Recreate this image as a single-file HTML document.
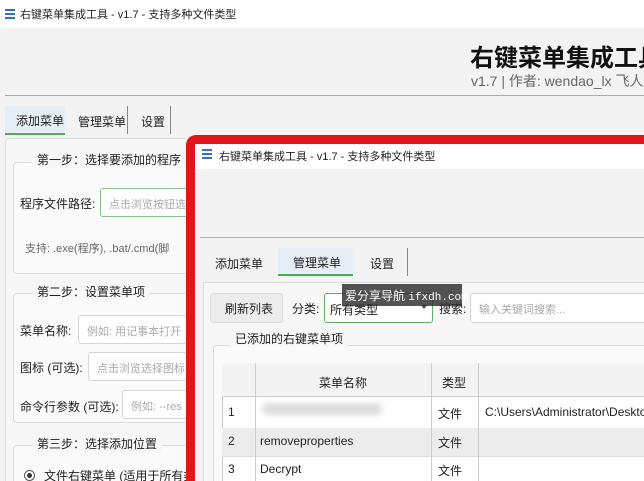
<!DOCTYPE html><html><head><meta charset="utf-8"><style>
*{margin:0;padding:0;box-sizing:border-box}
html{width:644px;height:481px;overflow:hidden}
body{width:644px;height:481px;overflow:hidden;background:#f3f3f3;font-family:"Liberation Sans","Noto Sans CJK SC",sans-serif;font-size:12px;color:#222;position:relative}
.a{position:absolute;white-space:nowrap}
.ham{position:absolute;width:10px;height:10px}
.ham i{display:block;height:2px;background:#2f6fd6;margin-bottom:2px}
.box{position:absolute;border:1px solid #ddd;background:#fafafa;border-radius:4px}
.inp{position:absolute;border:1px solid #d6d6d6;background:#fff;border-radius:3px;color:#aaa;font-size:11px;padding:4px 8px;white-space:nowrap;overflow:hidden}
</style></head><body>
<div class="a" style="left:0;top:0;width:644px;height:28px;background:#fff"></div>
<div class="ham" style="left:5px;top:9px"><i></i><i></i><i></i></div>
<div class="a" style="left:20px;top:6px;font-size:11px">右键菜单集成工具 - v1.7 - 支持多种文件类型</div>
<div class="a" style="left:470px;top:38px;font-size:24px;font-weight:bold;color:#111">右键菜单集成工具</div>
<div class="a" style="left:471px;top:71px;font-size:14px;color:#666">v1.7 | 作者: wendao_lx 飞人</div>
<div class="a" style="left:5px;top:95px;width:640px;height:1px;background:#aaa"></div>
<div class="a" style="left:5px;top:106px;width:60px;height:29px;background:#e6eef5;border-bottom:2px solid #4caf50"></div>
<div class="a" style="left:16px;top:112px">添加菜单</div>
<div class="a" style="left:78px;top:113px">管理菜单</div>
<div class="a" style="left:127px;top:106px;width:1px;height:28px;background:#888"></div>
<div class="a" style="left:141px;top:113px">设置</div>
<div class="a" style="left:170px;top:106px;width:1px;height:28px;background:#888"></div>
<div class="box" style="left:5px;top:138px;width:200px;height:350px;background:#f7f7f7"></div>
<div class="box" style="left:13px;top:162px;width:190px;height:112px"></div>
<div class="a" style="left:32px;top:151px;background:#f7f7f7;padding:0 5px">第一步：选择要添加的程序</div>
<div class="a" style="left:20px;top:195px;font-size:12px">程序文件路径:</div>
<div class="inp" style="left:100px;top:188px;width:100px;height:29px;border-color:#8bc48f;padding-top:7px">点击浏览按钮选择</div>
<div class="a" style="left:25px;top:240px;font-size:11px;color:#666">支持: .exe(程序), .bat/.cmd(脚</div>
<div class="box" style="left:13px;top:293px;width:190px;height:130px"></div>
<div class="a" style="left:32px;top:283px;background:#f7f7f7;padding:0 5px">第二步：设置菜单项</div>
<div class="a" style="left:20px;top:322px;font-size:12px">菜单名称:</div>
<div class="inp" style="left:78px;top:315px;width:120px;height:29px;padding-top:7px">例如: 用记事本打开</div>
<div class="a" style="left:20px;top:359px;font-size:12px">图标 (可选):</div>
<div class="inp" style="left:88px;top:352px;width:110px;height:29px;padding-top:7px">点击浏览选择图标</div>
<div class="a" style="left:20px;top:398px;font-size:12px">命令行参数 (可选):</div>
<div class="inp" style="left:122px;top:390px;width:80px;height:29px;padding-top:7px">例如: --res</div>
<div class="box" style="left:13px;top:445px;width:190px;height:40px"></div>
<div class="a" style="left:32px;top:435px;background:#f7f7f7;padding:0 5px">第三步：选择添加位置</div>
<div class="a" style="left:24px;top:470px;width:11px;height:11px;border:1px solid #555;border-radius:50%;background:#fff"></div>
<div class="a" style="left:27px;top:473px;width:5px;height:5px;border-radius:50%;background:#333"></div>
<div class="a" style="left:44px;top:467px">文件右键菜单 (适用于所有类</div>

<div class="a" style="left:186px;top:135px;width:460px;height:346px;background:#e3141c;border-radius:10px 0 0 0"></div>
<div class="a" style="left:195px;top:144px;width:450px;height:337px;background:#f3f3f3"></div>
<div class="a" style="left:195px;top:144px;width:450px;height:25px;background:#fff"></div>
<div class="ham" style="left:202px;top:149px"><i></i><i></i><i></i></div>
<div class="a" style="left:219px;top:148px;font-size:11px">右键菜单集成工具 - v1.7 - 支持多种文件类型</div>
<div class="a" style="left:200px;top:237px;width:450px;height:1px;background:#aaa"></div>
<div class="a" style="left:278px;top:248px;width:75px;height:28px;background:#e6eef5;border-bottom:2px solid #4caf50"></div>
<div class="a" style="left:215px;top:255px">添加菜单</div>
<div class="a" style="left:293px;top:254px">管理菜单</div>
<div class="a" style="left:370px;top:255px">设置</div>
<div class="a" style="left:407px;top:248px;width:1px;height:28px;background:#888"></div>
<div class="a" style="left:203px;top:282px;width:445px;height:200px;background:#f7f7f7;border:1px solid #ddd"></div>
<div class="a" style="left:210px;top:293px;width:73px;height:30px;background:#ececec;border:1px solid #ddd;border-radius:3px"></div>
<div class="a" style="left:225px;top:300px">刷新列表</div>
<div class="a" style="left:292px;top:300px">分类:</div>
<div class="a" style="left:324px;top:293px;width:109px;height:30px;background:#fff;border:1px solid #5fae63;border-radius:3px"></div>
<div class="a" style="left:330px;top:301px">所有类型</div>
<div class="a" style="left:421px;top:305px;border:3px solid transparent;border-top:4px solid #444"></div>
<div class="a" style="left:439px;top:300px">搜索:</div>
<div class="inp" style="left:470px;top:293px;width:180px;height:30px;padding-top:7px">输入关键词搜索...</div>
<div class="a" style="left:342px;top:284px;width:120px;height:22px;background:rgba(40,40,40,.8)"></div>
<div class="a" style="left:345px;top:287px;color:#fff;font-size:12px">爱分享导航 <span style="font-family:'Liberation Mono',monospace;font-size:11px">ifxdh.com</span></div>
<div class="a" style="left:213px;top:345px;width:440px;height:140px;background:#fafafa;border:1px solid #ddd;border-radius:4px"></div>
<div class="a" style="left:230px;top:330px;background:#f7f7f7;padding:0 5px">已添加的右键菜单项</div>
<div class="a" style="left:222px;top:363px;width:430px;height:120px;background:#fff;border:1px solid #ccc"></div>
<div class="a" style="left:222px;top:363px;width:430px;height:34px;background:#f3f3f3;border-bottom:1px solid #ccc"></div>
<div class="a" style="left:222px;top:428px;width:430px;height:28px;background:#ececec"></div>
<div class="a" style="left:222px;top:456px;width:430px;height:1px;background:#ddd"></div>
<div class="a" style="left:255px;top:363px;width:1px;height:120px;background:#ccc"></div>
<div class="a" style="left:431px;top:363px;width:1px;height:120px;background:#ccc"></div>
<div class="a" style="left:478px;top:363px;width:1px;height:120px;background:#ccc"></div>
<div class="a" style="left:319px;top:374px">菜单名称</div>
<div class="a" style="left:442px;top:374px">类型</div>
<div class="a" style="left:228px;top:405px">1</div>
<div class="a" style="left:262px;top:403px;width:120px;height:12px;background:#ddd;border-radius:6px;filter:blur(3px)"></div>
<div class="a" style="left:438px;top:405px">文件</div>
<div class="a" style="left:485px;top:405px">C:\Users\Administrator\Desktop</div>
<div class="a" style="left:228px;top:434px">2</div>
<div class="a" style="left:260px;top:434px">removeproperties</div>
<div class="a" style="left:438px;top:434px">文件</div>
<div class="a" style="left:228px;top:462px">3</div>
<div class="a" style="left:260px;top:462px">Decrypt</div>
<div class="a" style="left:438px;top:462px">文件</div>
</body></html>
